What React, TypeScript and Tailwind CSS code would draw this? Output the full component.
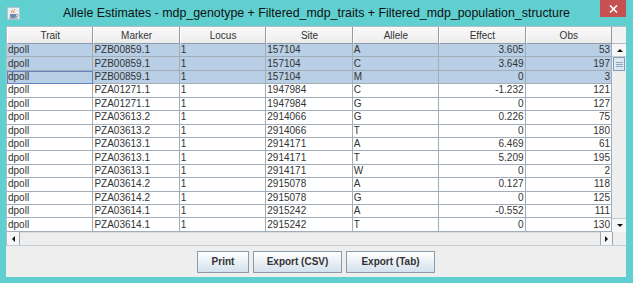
import React from "react";

type Row = {
  marker: string;
  site: string;
  allele: string;
  effect: string;
  obs: string;
};

const rows: Row[] = [
  { marker: "PZB00859.1", site: "157104", allele: "A", effect: "3.605", obs: "53" },
  { marker: "PZB00859.1", site: "157104", allele: "C", effect: "3.649", obs: "197" },
  { marker: "PZB00859.1", site: "157104", allele: "M", effect: "0", obs: "3" },
  { marker: "PZA01271.1", site: "1947984", allele: "C", effect: "-1.232", obs: "121" },
  { marker: "PZA01271.1", site: "1947984", allele: "G", effect: "0", obs: "127" },
  { marker: "PZA03613.2", site: "2914066", allele: "G", effect: "0.226", obs: "75" },
  { marker: "PZA03613.2", site: "2914066", allele: "T", effect: "0", obs: "180" },
  { marker: "PZA03613.1", site: "2914171", allele: "A", effect: "6.469", obs: "61" },
  { marker: "PZA03613.1", site: "2914171", allele: "T", effect: "5.209", obs: "195" },
  { marker: "PZA03613.1", site: "2914171", allele: "W", effect: "0", obs: "2" },
  { marker: "PZA03614.2", site: "2915078", allele: "A", effect: "0.127", obs: "118" },
  { marker: "PZA03614.2", site: "2915078", allele: "G", effect: "0", obs: "125" },
  { marker: "PZA03614.1", site: "2915242", allele: "A", effect: "-0.552", obs: "111" },
  { marker: "PZA03614.1", site: "2915242", allele: "T", effect: "0", obs: "130" },
];

const headers = ["Trait", "Marker", "Locus", "Site", "Allele", "Effect", "Obs"];

const JavaIcon = () => (
  <svg width="13" height="13" viewBox="0 0 13 13">
    <rect x="0.5" y="0.5" width="12" height="12" fill="#e9eef3" stroke="#b9c3cc" />
    <path d="M3 7 h6 v2.5 a2 2 0 0 1 -2 1.5 h-2 a2 2 0 0 1 -2 -1.5 z" fill="#6d8aa6" />
    <path d="M9 7.5 h1 a1 1 0 0 1 0 2 h-1" fill="none" stroke="#6d8aa6" strokeWidth="0.8" />
    <path d="M5 6 q-1 -1.5 0.5 -3 M7 6 q-1 -1.5 0.5 -3.5" fill="none" stroke="#e07b2a" strokeWidth="0.9" />
    <rect x="2" y="10.8" width="9" height="0.8" fill="#6d8aa6" />
  </svg>
);

const Arrow = ({ dir }: { dir: "up" | "down" | "left" | "right" }) => {
  const pts = {
    up: "1,5 4,2 7,5",
    down: "1,2 4,5 7,2",
    left: "5,1 2,4 5,7",
    right: "2,1 5,4 2,7",
  }[dir];
  return (
    <svg width="7" height="7" viewBox="0 0 7 7">
      <polygon points={pts} fill="#111" />
    </svg>
  );
};

export default function App() {
  return (
    <div
      className="w-[633px] h-[283px] bg-[#5fcfcf] flex flex-col overflow-hidden"
      style={{ fontFamily: '"Liberation Sans", Arial, sans-serif' }}
    >
      {/* title bar */}
      <div className="h-[26px] relative flex items-center justify-center shrink-0">
        <div className="absolute left-[7px] top-[7px]">
          <JavaIcon />
        </div>
        <span className="text-[12.4px] text-[#111] pt-[1px]">
          Allele Estimates - mdp_genotype + Filtered_mdp_traits + Filtered_mdp_population_structure
        </span>
        <div className="absolute right-[7px] top-0 w-[26px] h-[17px] bg-[#c75050] flex items-center justify-center">
          <svg width="9" height="8" viewBox="0 0 9 8">
            <path d="M1 0.5 L8 7.5 M8 0.5 L1 7.5" stroke="#fff" strokeWidth="1.6" />
          </svg>
        </div>
      </div>

      {/* content */}
      <div className="ml-[6px] mr-[7px] mb-[6px] flex-1 bg-[#eeeeee] flex flex-col text-[10px] text-[#333]">
        <div className="flex flex-col border-l border-t border-[#b4bcc4]">
          <div className="flex">
            {/* table */}
            <div className="flex-1 bg-white">
              <div className="grid grid-cols-7 h-[17px]">
                {headers.map((h) => (
                  <div
                    key={h}
                    className="flex items-center justify-center border-r border-b border-[#8f9ba6] border-l border-l-white bg-gradient-to-b from-[#fafafa] to-[#ececec]"
                  >
                    {h}
                  </div>
                ))}
              </div>
              {rows.map((r, i) => {
                const sel = i < 3;
                const cells = ["dpoll", r.marker, "1", r.site, r.allele, r.effect, r.obs];
                return (
                  <div
                    key={i}
                    className={`grid grid-cols-7 h-[13.43px] ${sel ? "bg-[#b8cfe5]" : "bg-white"}`}
                  >
                    {cells.map((c, j) => (
                      <div
                        key={j}
                        className={`flex items-center px-[1px] leading-none border-r border-b border-[#a3adb7] ${
                          j >= 5 ? "justify-end" : "justify-start"
                        } ${i === 2 && j === 0 ? "outline outline-1 outline-[#6382bf] -outline-offset-1" : ""}`}
                      >
                        {c}
                      </div>
                    ))}
                  </div>
                );
              })}
            </div>
            {/* vertical scrollbar */}
            <div className="w-[14px] flex flex-col bg-[#eeeeee]">
              <div className="h-[17px] border-b border-[#b4bcc4] bg-[#f2f2f2]" />
              <div className="h-[13.43px] flex items-center justify-center bg-[#f6f6f6] border-b border-[#c4ccd4]">
                <Arrow dir="up" />
              </div>
              <div className="h-[13.43px] mx-[1px] flex flex-col items-center justify-center gap-[1px] bg-[#dde8f3] border border-[#7f9db9]">
                <div className="w-[7px] h-px bg-[#8fa6c1]" />
                <div className="w-[7px] h-px bg-[#8fa6c1]" />
                <div className="w-[7px] h-px bg-[#8fa6c1]" />
              </div>
              <div className="flex-1" />
              <div className="h-[13.43px] flex items-center justify-center bg-[#f6f6f6] border-t border-[#c4ccd4]">
                <Arrow dir="down" />
              </div>
            </div>
          </div>
          {/* horizontal scrollbar */}
          <div className="h-[14px] flex border-b border-[#c4ccd4]">
            <div className="w-[13px] flex items-center justify-center bg-[#f6f6f6] border-r border-[#9aa6b2]">
              <Arrow dir="left" />
            </div>
            <div className="flex-1 bg-[#eeeeee] border-t border-[#d8dde2]" />
            <div className="w-[13px] flex items-center justify-center bg-[#f6f6f6] border-l border-r border-[#9aa6b2]">
              <Arrow dir="right" />
            </div>
            <div className="w-[13px] bg-[#eeeeee]" />
          </div>
        </div>

        {/* buttons */}
        <div className="flex-1 flex items-center justify-center gap-[4px] pt-[1px] font-bold">
          {["Print", "Export (CSV)", "Export (Tab)"].map((b, i) => (
            <button
              key={b}
              className={`h-[22px] ${
                i === 0 ? "w-[52px]" : "w-[89px]"
              } border border-[#8d9aa7] bg-gradient-to-b from-white to-[#d4e1ee] text-[#333] text-[10px]`}
            >
              {b}
            </button>
          ))}
        </div>
      </div>
    </div>
  );
}
